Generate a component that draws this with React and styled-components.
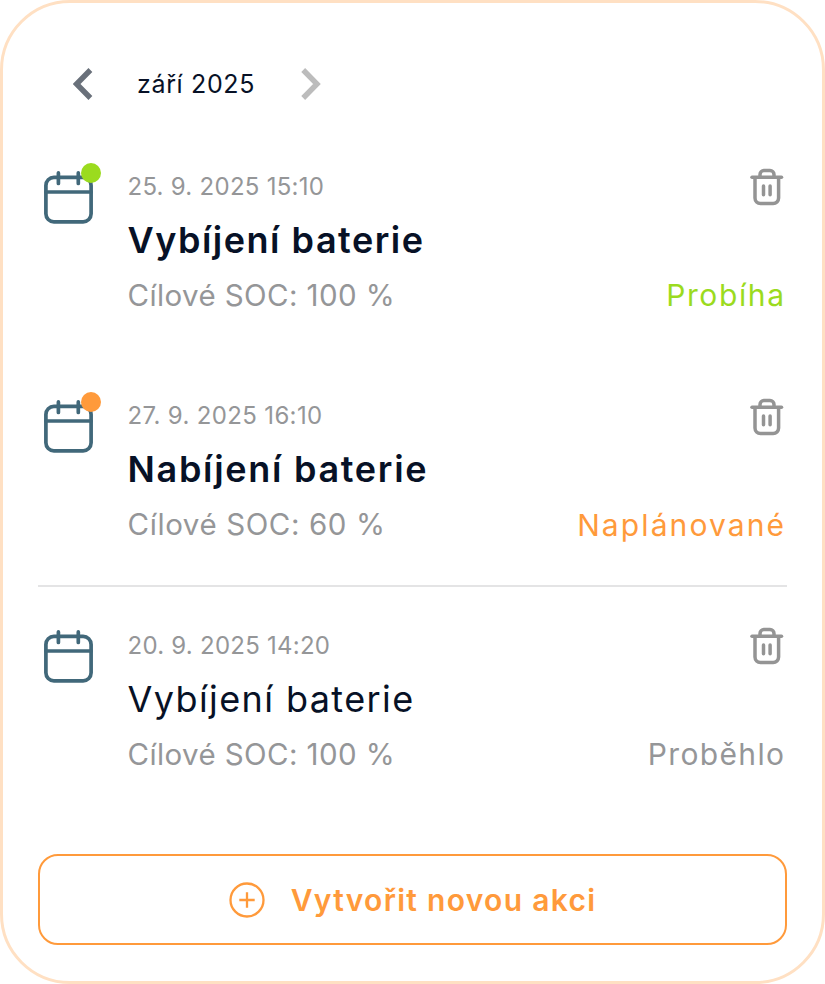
import React from "react";
import styled, { createGlobalStyle } from "styled-components";

const GlobalStyle = createGlobalStyle`
  * {
    box-sizing: border-box;
  }
  body {
    margin: 0;
    background: #fff;
    font-family: Inter, "Open Sans", sans-serif;
  }
  h2, p {
    margin: 0;
  }
  svg {
    display: block;
    fill: none;
  }
  button {
    padding: 0;
    border: none;
    background: none;
    font-family: inherit;
    cursor: pointer;
  }
`;

const actions = [
  {
    id: 1,
    date: "25. 9. 2025 15:10",
    dateSpacing: "0.27px",
    title: "Vybíjení baterie",
    titleSpacing: "1.5px",
    soc: "Cílové SOC: 100 %",
    socSpacing: "0.4px",
    status: "Probíha",
    statusSpacing: "1.6px",
    color: "#9bdb1e",
    active: true,
  },
  {
    id: 2,
    date: "27. 9. 2025 16:10",
    dateSpacing: "0.35px",
    title: "Nabíjení baterie",
    titleSpacing: "1.7px",
    soc: "Cílové SOC: 60 %",
    socSpacing: "0.6px",
    status: "Naplánované",
    statusSpacing: "2.1px",
    color: "#ff9a3b",
    active: true,
  },
  {
    id: 3,
    date: "20. 9. 2025 14:20",
    dateSpacing: "0.25px",
    title: "Vybíjení baterie",
    titleSpacing: "1.4px",
    soc: "Cílové SOC: 100 %",
    socSpacing: "0.4px",
    status: "Proběhlo",
    statusSpacing: "1.35px",
    color: "#959698",
    active: false,
  },
];

const CalendarIcon = () => (
  <svg width="50" height="54" viewBox="0 0 50 54" stroke="#41687a" strokeWidth="3.7" strokeLinecap="round">
    <rect x="2.9" y="7.4" width="45.2" height="44.4" rx="8" />
    <path d="M3 22H48M15.4 2.9V13.4M35.3 2.9V13.4" />
  </svg>
);

const TrashIcon = () => (
  <svg width="34" height="38" viewBox="0 0 34 38" stroke="#949494" strokeWidth="3.5" strokeLinecap="round">
    <path d="M2 9.3H31.5" />
    <path d="M10 9V6.5a4 4 0 0 1 4-4h6a4 4 0 0 1 4 4V9" />
    <path d="M5 10V30a5.5 5.5 0 0 0 5.5 5.5h12.6a5.5 5.5 0 0 0 5.5-5.5V10" />
    <path d="M13.5 18V26.8M20.1 18V26.8" />
  </svg>
);

const App = () => {
  return (
    <Card>
      <GlobalStyle />
      <MonthNav>
        <button aria-label="Předchozí měsíc">
          <svg width="20" height="32" viewBox="0 0 20 32" stroke="#69707a" strokeWidth="5.4">
            <path d="M17.4 2L3.6 16L17.4 30" />
          </svg>
        </button>
        <Month>září 2025</Month>
        <button aria-label="Další měsíc">
          <svg width="20" height="32" viewBox="0 0 20 32" stroke="#bcbcbc" strokeWidth="5.4">
            <path d="M2.2 2L16 16L2.2 30" />
          </svg>
        </button>
      </MonthNav>
      <List>
        {actions.map((action) => (
          <React.Fragment key={action.id}>
            {!action.active && <Divider />}
            <Row>
              <IconBox>
                <CalendarIcon />
                {action.active && <Dot $color={action.color} />}
              </IconBox>
              <Info>
                <DateText $spacing={action.dateSpacing}>{action.date}</DateText>
                <Title $active={action.active} $spacing={action.titleSpacing}>
                  {action.title}
                </Title>
                <Soc $spacing={action.socSpacing}>{action.soc}</Soc>
              </Info>
              <Side>
                <button aria-label="Smazat">
                  <TrashIcon />
                </button>
                <Status $color={action.color} $spacing={action.statusSpacing}>
                  {action.status}
                </Status>
              </Side>
            </Row>
          </React.Fragment>
        ))}
      </List>
      <CreateButton>
        <svg width="36" height="36" viewBox="0 0 36 36" stroke="#ff9a3b" strokeWidth="2.3">
          <circle cx="18" cy="18" r="16.5" />
          <path d="M18 10.3V25.7M10.3 18H25.7" />
        </svg>
        <span>Vytvořit novou akci</span>
      </CreateButton>
    </Card>
  );
};

const Card = styled.div`
  width: 825px;
  height: 984px;
  padding: 65px 35px 36px;
  border: 3px solid #ffe0c3;
  border-radius: 70px;
  display: flex;
  flex-direction: column;
  background: #fff;
`;

const MonthNav = styled.div`
  height: 32px;
  padding-left: 35px;
  display: flex;
  align-items: center;
`;

const Month = styled.div`
  width: 164px;
  margin: 0 0 0 44px;
  font-size: 25px;
  line-height: 32px;
  letter-spacing: 0.65px;
  white-space: nowrap;
  color: #071126;
`;

const List = styled.div`
  padding-top: 62px;
`;

const Row = styled.div`
  height: 152px;
  padding: 0 3px 0 5px;
  display: flex;
  & + & {
    margin-top: 77.5px;
  }
`;

const Divider = styled.div`
  height: 2px;
  margin: 41px 0 34.5px;
  background: #e4e4e5;
`;

const IconBox = styled.div`
  position: relative;
  width: 50px;
  height: 54px;
  margin-top: 7.5px;
`;

const Dot = styled.span`
  position: absolute;
  top: -7px;
  right: -8px;
  width: 20px;
  height: 20px;
  border-radius: 50%;
  background: ${(props) => props.$color};
`;

const Info = styled.div`
  flex: 1;
  padding: 6.5px 0 0 34.5px;
  white-space: nowrap;
`;

const DateText = styled.p`
  font-size: 24px;
  line-height: 36px;
  letter-spacing: ${(props) => props.$spacing};
  color: #959698;
`;

const Title = styled.h2`
  font-size: 36px;
  line-height: 54px;
  margin-top: 8px;
  font-weight: ${(props) => (props.$active ? 600 : 400)};
  letter-spacing: ${(props) => props.$spacing};
  color: #071126;
`;

const Soc = styled.p`
  margin-top: 10px;
  font-size: 29.5px;
  line-height: 36px;
  letter-spacing: ${(props) => props.$spacing};
  color: #959698;
`;

const Side = styled.div`
  display: flex;
  flex-direction: column;
  justify-content: space-between;
  align-items: flex-end;
  padding: 6px 0 1px;
`;

/* the trailing letter gap is pulled out so the text ends at the column edge */
const Status = styled.p`
  margin-right: calc(0px - ${(props) => props.$spacing});
  font-size: 30px;
  line-height: 36px;
  letter-spacing: ${(props) => props.$spacing};
  color: ${(props) => props.$color};
`;

const CreateButton = styled.button`
  && {
    height: 91px;
    margin-top: auto;
    border: 2px solid #ff9a3b;
    border-radius: 20px;
    display: flex;
    justify-content: center;
    align-items: center;
    gap: 26px;
    font-size: 30px;
    font-weight: 600;
    letter-spacing: 1.3px;
    color: #ff9a3b;
  }
`;

export default App;
